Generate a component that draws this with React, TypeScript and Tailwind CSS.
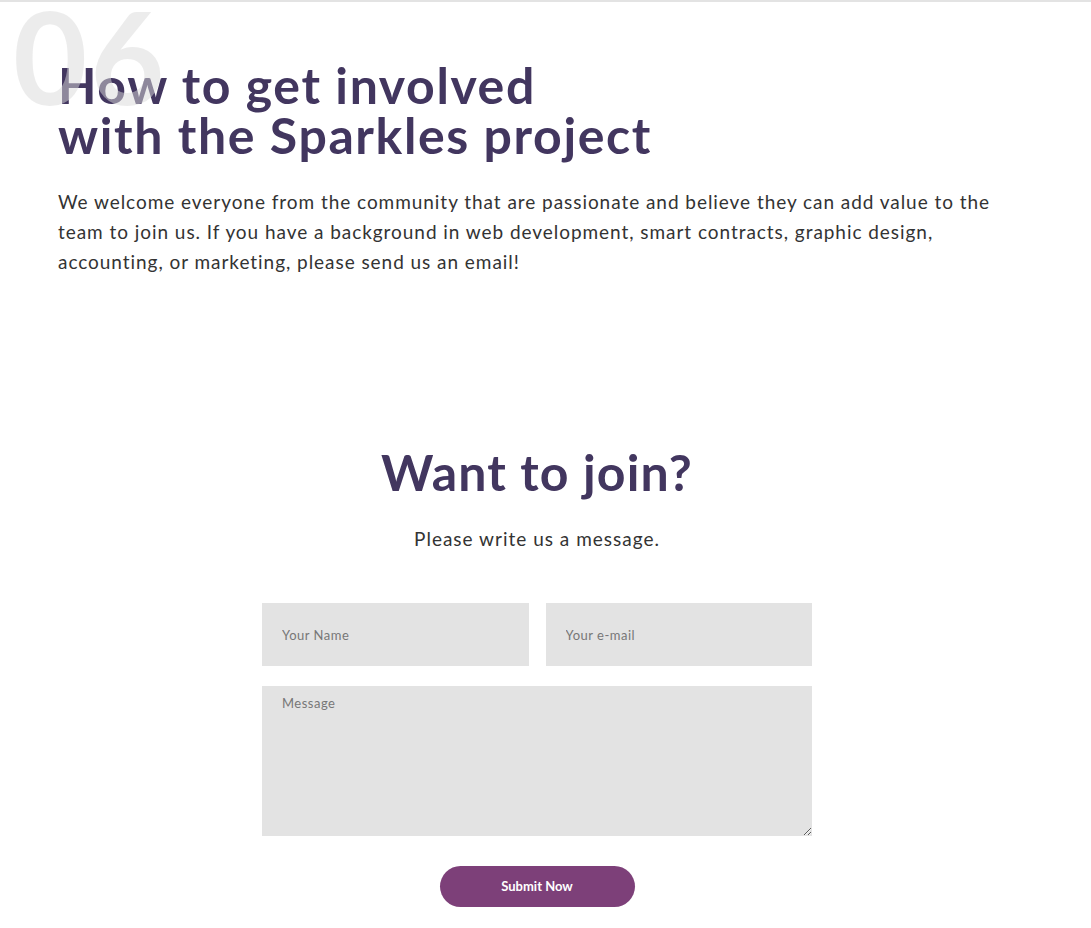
import React from "react";

export default function App() {
  return (
    <div className="w-[1091px] min-h-[928px] bg-white border-t-2 border-[#e3e3e3] font-['Lato','Noto_Sans',sans-serif]">
      <div className="w-[1074px]">
        <section className="relative px-[58px] pt-[58px]">
          <h2 className="relative text-[50px] leading-[50px] font-bold text-[#42365f] tracking-[1.6px]">
            How to get involved
            <br />
            with the Sparkles project
          </h2>
          <div className="absolute left-[13px] top-[-10px] text-[128px] leading-none font-bold tracking-[3px] text-[rgba(218,218,218,0.5)] select-none pointer-events-none">
            06
          </div>
          <p className="mt-[27px] text-[19px] leading-[30px] text-[#333] font-normal tracking-[0.95px] whitespace-nowrap">
            We welcome everyone from the community that are passionate and believe they can add value to the
            <br />
            team to join us. If you have a background in web development, smart contracts, graphic design,
            <br />
            accounting, or marketing, please send us an email!
          </p>
        </section>

        <section className="flex flex-col items-center pt-[165px] pb-[20px]">
          <h2 className="text-[50px] leading-[60px] font-bold text-[#42365f] tracking-[1.15px]">Want to join?</h2>
          <p className="mt-[22px] text-[19px] leading-[30px] text-[#333] tracking-[1px]">Please write us a message.</p>
          <form className="mt-[49px] w-[550px] flex flex-col" onSubmit={(e) => e.preventDefault()}>
            <div className="flex gap-[17px]">
              <input
                type="text"
                placeholder="Your Name"
                className="flex-1 min-w-0 h-[63px] bg-[#e3e3e3] px-[20px] text-[13px] tracking-[0.5px] text-[#444] placeholder:text-[#777] outline-none"
              />
              <input
                type="email"
                placeholder="Your e-mail"
                className="flex-1 min-w-0 h-[63px] bg-[#e3e3e3] px-[20px] text-[13px] tracking-[0.5px] text-[#444] placeholder:text-[#777] outline-none"
              />
            </div>
            <textarea
              placeholder="Message"
              className="mt-[20px] h-[150px] bg-[#e3e3e3] px-[20px] py-[8px] text-[13px] tracking-[0.5px] text-[#444] placeholder:text-[#777] outline-none resize-y"
            />
            <div className="flex justify-center mt-[30px]">
              <button
                type="submit"
                className="w-[195px] h-[41px] rounded-full bg-[#7d4079] text-white text-[13px] font-bold"
              >
                Submit Now
              </button>
            </div>
          </form>
        </section>
      </div>
    </div>
  );
}
